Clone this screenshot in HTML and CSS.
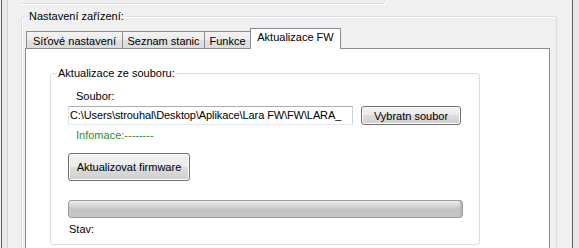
FILE: index.html
```html
<!DOCTYPE html>
<html lang="cs">
<head>
<meta charset="utf-8">
<title>Aktualizace FW</title>
<link rel="stylesheet" href="styles.css">
</head>
<body>
<div class="window">
  <div class="edge edge-left"></div>
  <div class="main">
    <div class="prev-box"></div>
    <fieldset class="group group-device">
      <legend class="group-title title-device">Nastavení zařízení:</legend>
      <div class="tabs">
        <div class="tab tab-net">Síťové nastavení</div>
        <div class="tab tab-stations">Seznam stanic</div>
        <div class="tab tab-func">Funkce</div>
        <div class="tab tab-fw is-active">Aktualizace FW</div>
      </div>
      <div class="tab-page">
        <fieldset class="group group-file">
          <legend class="group-title title-file">Aktualizace ze souboru:</legend>
          <div class="label">Soubor:</div>
          <div class="file-row">
            <div class="textbox"><span class="textbox-text">C:\Users\strouhal\Desktop\Aplikace\Lara FW\FW\LARA_</span></div>
            <button class="btn btn-browse">Vybratn soubor</button>
          </div>
          <div class="label info">Infomace:--------</div>
          <button class="btn btn-update">Aktualizovat firmware</button>
          <div class="progress"></div>
          <div class="label status">Stav:</div>
        </fieldset>
      </div>
    </fieldset>
  </div>
  <div class="edge edge-right"></div>
</div>
</body>
</html>
```
FILE: styles.css
```css
* { box-sizing: border-box; }
html, body { margin: 0; padding: 0; }
body {
  width: 579px;
  height: 248px;
  overflow: hidden;
  background: #f0f0f0;
  font-family: "Liberation Sans", Arial, sans-serif;
  font-size: 11px;
  color: #000;
}
.window { display: flex; height: 248px; }
.edge-left {
  width: 7px;
  margin-left: 1px;
  border-left: 1px solid #5f5f5f;
  border-right: 1px solid #d4d4d4;
  background: #e8e8e8;
}
.edge-right {
  width: 7px;
  border-left: 1px solid #5f5f5f;
  background: #e8e8e8;
}
.main {
  flex: 1;
  min-width: 0;
  padding: 0 15px 0 13px;
}
.prev-box {
  width: 364px;
  height: 4px;
  border-bottom: 1px solid #d5dfe5;
  border-right: 1px solid #d5dfe5;
  border-bottom-right-radius: 3px;
  box-shadow: 1px 1px 0 #fff;
}
.group {
  margin: 0;
  min-width: 0;
  border: 1px solid #d5dfe5;
  border-radius: 3px;
}
.group-title {
  padding: 0 1px;
  line-height: 13px;
}
.group-device {
  margin-top: 6px;
  padding: 5px 6px 0 3px;
  box-shadow: inset 1px 1px 0 #fff;
}
.title-device { margin-left: 3px; }
.tabs {
  display: flex;
  align-items: flex-end;
  height: 20px;
  padding-left: 1px;
  position: relative;
  z-index: 1;
}
.tab {
  position: relative;
  height: 17px;
  padding-top: 3px;
  line-height: 13px;
  border: 1px solid #898c95;
  border-bottom: 0;
  margin-right: -1px;
  text-align: center;
  white-space: nowrap;
  background: linear-gradient(#f3f3f3, #ebebeb 50%, #e2e2e2 50%, #dcdcdc);
}
.tab-net { width: 97px; }
.tab-stations { width: 83px; }
.tab-func { width: 47px; }
.tab-fw { width: 91px; }
.tab.is-active {
  z-index: 2;
  height: 21px;
  padding-top: 2px;
  margin-bottom: -1px;
  background: #fff;
}
.tab-page {
  height: 240px;
  background: #fff;
  border: 1px solid #898c95;
  padding: 18px 0 0 24px;
}
.group-file {
  width: 430px;
  padding: 10px 0 8px 17px;
}
.title-file { margin-left: -11px; }
.label { line-height: 13px; margin-left: 8px; }
.file-row {
  display: flex;
  align-items: center;
  margin-top: 3px;
}
.textbox {
  width: 285px;
  height: 19px;
  border: 1px solid;
  border-color: #abadb3 #c5d5e4 #e3e9ef #e2e3ea;
  background: #fff;
  overflow: hidden;
  white-space: nowrap;
  line-height: 17px;
  padding-left: 1px;
}
.textbox-text { display: block; letter-spacing: -0.1px; }
.btn {
  font: inherit;
  color: #000;
  padding: 0;
  border: 1px solid #707070;
  border-radius: 3px;
  background: linear-gradient(#f2f2f2, #ebebeb 50%, #dddddd 50%, #cfcfcf);
  box-shadow: inset 0 0 0 1px #fcfcfc;
}
.btn-browse {
  width: 100px;
  height: 19px;
  margin-left: 8px;
}
.info { color: #2f8f2f; margin-top: 4px; }
.btn-update {
  display: block;
  width: 122px;
  height: 28px;
  margin-top: 11px;
}
.progress {
  width: 395px;
  height: 18px;
  margin-top: 19px;
  border: 1px solid #9c9c9c;
  border-radius: 3px;
  background: linear-gradient(#ececec, #d6d6d6 30%, #c3c3c3 55%, #c7c7c7);
  box-shadow: inset -2px 0 0 #b9b9b9;
}
.status { margin-top: 5px; margin-left: 1px; }
```
